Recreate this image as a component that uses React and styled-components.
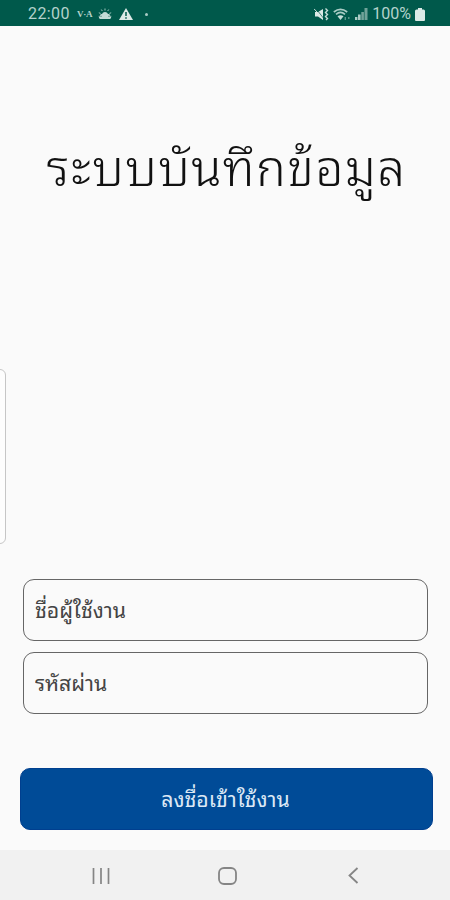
import React, { useState } from 'react';
import styled, { createGlobalStyle } from 'styled-components';

const GlobalStyle = createGlobalStyle`
  * {
    box-sizing: border-box;
  }
  body {
    margin: 0;
    background: #fafafa;
    font-family: "Noto Sans Thai Looped", Loma, sans-serif;
  }
`;

const Screen = styled.div`
  position: relative;
  display: flex;
  flex-direction: column;
  width: 450px;
  height: 900px;
  overflow: hidden;
  background: #fafafa;
`;

const StatusBar = styled.header`
  display: flex;
  justify-content: space-between;
  align-items: center;
  height: 26px;
  padding: 2px 25px 0 28px;
  background: #00594b;
  color: #b4d2cc;
  font-family: Roboto, sans-serif;
  font-size: 16px;
  line-height: 24px;
`;

const StatusGroup = styled.div`
  display: flex;
  align-items: center;
  gap: ${props => props.$gap}px;
`;

const Time = styled.span`
  width: 42px;
  letter-spacing: 0.4px;
`;

const Carrier = styled.span`
  width: 14px;
  font-family: "Liberation Serif", serif;
  font-size: 9px;
  font-weight: 900;
  letter-spacing: -0.2px;
  white-space: nowrap;
`;

const Dot = styled.span`
  width: 3px;
  height: 3px;
  margin-left: 5px;
  border-radius: 50%;
  background: #a9ccc5;
`;

const Main = styled.main`
  display: flex;
  flex-direction: column;
  flex: 1;
  padding: 104px 17px 20px 20px;
`;

const Title = styled.h1`
  margin: 0;
  height: 80px;
  color: #111;
  font-size: 50px;
  font-weight: 300;
  line-height: 68px;
  letter-spacing: 1.3px;
  text-align: center;
  white-space: nowrap;
`;

const Form = styled.form`
  display: flex;
  flex-direction: column;
  margin-top: auto;
`;

const Input = styled.input`
  width: 405px;
  height: ${props => props.$height}px;
  margin: 0 0 ${props => props.$gap}px 3px;
  padding: 0 11px 4px;
  border: 1px solid #666;
  border-radius: 11px;
  background: #fafafa;
  font-family: inherit;
  font-size: 21.3px;
  outline: none;

  &::placeholder {
    color: #444;
    opacity: 1;
  }
`;

const Button = styled.button`
  height: 62px;
  padding: 0 2px 4px 0;
  border: 1px solid #003f8f;
  border-radius: 10px;
  background: #004b97;
  color: #dce8f5;
  font-family: inherit;
  font-size: 21.3px;
`;

const EdgeHandle = styled.div`
  position: absolute;
  top: 369px;
  left: -10px;
  width: 16px;
  height: 175px;
  border: 1px solid #c6c6c6;
  border-radius: 6px;
  background: #fdfdfd;
`;

const NavBar = styled.nav`
  display: flex;
  align-items: center;
  height: 50px;
  padding: 1px 0 0 92px;
  background: #f1f1f1;
`;

const HomeButton = styled.svg`
  margin: 0 111px 0 107.5px;
`;

function WeatherIcon() {
  return (
    <svg width="14" height="12" viewBox="0 0 14 12" fill="#c3dcd7">
      <path d="M2 11a2 2 0 0 1 0-3.6 1.8 1.8 0 0 1 2-1.4 3.2 3.2 0 0 1 6 0 1.7 1.7 0 0 1 2 1.4 2 2 0 0 1 0 3.6z" />
      <path d="M7 .5v2M3.3 1.5l1 1.5M10.7 1.5l-1 1.5M.8 4.8l1.8.6M13.2 4.8l-1.8.6" fill="none" stroke="#9dc4bc" strokeWidth="1" />
      <path d="M0 8.3h4M10 8.3h4" stroke="#4f8d82" strokeWidth=".7" />
    </svg>
  );
}

function WarningIcon() {
  return (
    <svg width="14" height="12" viewBox="0 0 14 12">
      <path d="M7 0l7 12H0z" fill="#dbe9e6" />
      <path d="M7 4v4M7 9.2v1.5" stroke="#00594b" strokeWidth="1.5" />
    </svg>
  );
}

function MuteIcon() {
  return (
    <svg width="15" height="13" viewBox="0 0 15 13" fill="none" stroke="#c3dcd7">
      <path d="M1 4h3l5-3v11L4 8.5H1z" fill="#dbe9e6" stroke="none" />
      <path d="M4 3.2l5.5 7" stroke="#00594b" strokeWidth=".7" />
      <path d="M0 .8l3 3.2" strokeWidth="1" />
      <path d="M11.5.5l2 2-2 2 2 2-2 2 2 2-1.5 1.5" strokeWidth="1.4" />
    </svg>
  );
}

function WifiIcon() {
  return (
    <svg width="18" height="13" viewBox="0 0 18 13" fill="none" stroke="#a9ccc5" strokeWidth="1.7">
      <path d="M.8 4q6.7-5.3 13.4 0M3 6.3q4.5-3.7 9 0" />
      <path d="M4.5 8.3q3-2 6 0l-3 3.7z" fill="#c3dcd7" stroke="none" />
      <path d="M12.3 9v3M15.8 9v2" stroke="#609b90" strokeWidth="1.3" />
    </svg>
  );
}

function SignalIcon() {
  return (
    <svg width="13" height="12" viewBox="0 0 13 12">
      <path d="M0 9h2.4v3H0zM3 6.5h2.6v5.5H3z" fill="#a9ccc5" />
      <path d="M6.3 4h2.6v8H6.3zM9.5 0h3v12h-3z" fill="#6fa399" />
    </svg>
  );
}

function BatteryIcon() {
  return (
    <svg width="10" height="13" viewBox="0 0 10 13">
      <path d="M3 0h4v1.5h1.5q1.5 0 1.5 1.5v9q0 1-1 1H1q-1 0-1-1V3q0-1.5 1.5-1.5H3z" fill="#dbe9e6" />
    </svg>
  );
}

function App() {

  const [username, setUsername] = useState('');
  const [password, setPassword] = useState('');

  return (
    <Screen>
      <GlobalStyle />
      <StatusBar>
        <StatusGroup $gap={7}>
          <Time>22:00</Time>
          <Carrier>V·A</Carrier>
          <WeatherIcon />
          <WarningIcon />
          <Dot />
        </StatusGroup>
        <StatusGroup $gap={4}>
          <MuteIcon />
          <WifiIcon />
          <SignalIcon />
          <span>100%</span>
          <BatteryIcon />
        </StatusGroup>
      </StatusBar>
      <Main>
        <Title>ระบบบันทึกข้อมูล</Title>
        <Form onSubmit={(e) => e.preventDefault()}>
          <Input
            $height={62}
            $gap={11}
            placeholder="ชื่อผู้ใช้งาน"
            value={username}
            onChange={(e) => setUsername(e.target.value)}
          />
          <Input
            $height={62}
            $gap={54}
            type="password"
            placeholder="รหัสผ่าน"
            value={password}
            onChange={(e) => setPassword(e.target.value)}
          />
          <Button>ลงชื่อเข้าใช้งาน</Button>
        </Form>
      </Main>
      <EdgeHandle />
      <NavBar>
        <svg width="18" height="16" viewBox="0 0 18 16" stroke="#858585" strokeWidth="1.7">
          <path d="M1.5 0v16M9 0v16M16.5 0v16" />
        </svg>
        <HomeButton width="19" height="18" viewBox="0 0 19 18" fill="none" stroke="#858585" strokeWidth="1.8">
          <rect x="1" y="1" width="17" height="16" rx="5" />
        </HomeButton>
        <svg width="11" height="17" viewBox="0 0 11 17" fill="none" stroke="#858585" strokeWidth="1.8">
          <path d="M9.5 1L1.5 8.5l8 7.5" />
        </svg>
      </NavBar>
    </Screen>
  );
}

export default App;
